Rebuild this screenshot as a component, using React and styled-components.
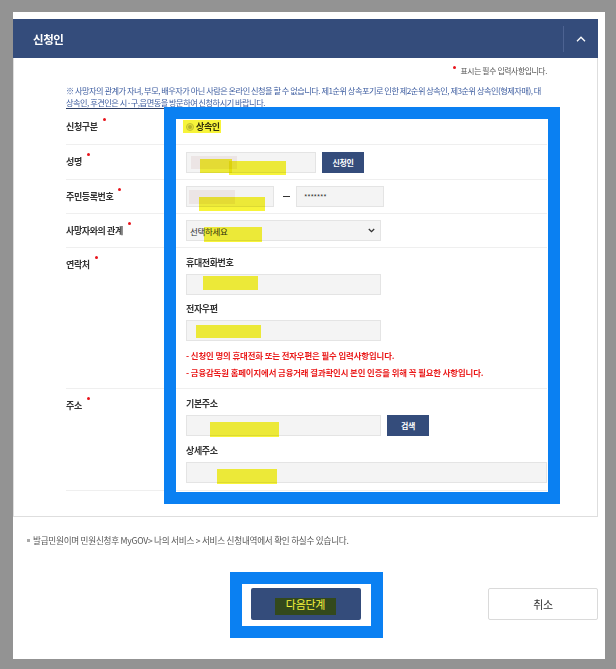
import React from 'react';
import styled, { createGlobalStyle } from 'styled-components';

const FONT = `"Noto Sans CJK KR", "Noto Sans", sans-serif`;
const NAVY = '#344c7b';
const BLUE = '#0a80f2';

const Global = createGlobalStyle`
  html, body { margin: 0; padding: 0; background: #939393; }
  body { font-family: ${FONT}; color: #333; }
  * { box-sizing: border-box; }
`;

const Page = styled.div`
  width: 616px;
  height: 669px;
  padding: 12px 11px 10px 13px;
`;

const Card = styled.div`
  position: relative;
  width: 592px;
  height: 647px;
  background: #fff;
  padding: 7px 7px 0 0;
`;

const Header = styled.header`
  height: 39px;
  background: ${NAVY};
  display: flex;
  align-items: center;
  justify-content: space-between;
  padding-left: 20px;
`;

const Title = styled.h2`
  margin: 0;
  font-size: 11.5px;
  font-weight: 700;
  color: #fff;
  letter-spacing: -0.4px;
`;

const Toggle = styled.div`
  width: 35px;
  height: 26px;
  border-left: 1px solid #4d6392;
  display: flex;
  align-items: center;
  justify-content: center;
`;

const Body = styled.div`
  border: 1px solid #dedede;
  border-top: none;
  padding: 7px 50px 25px 52px;
`;

const ReqNote = styled.p`
  margin: 0;
  text-align: right;
  font-size: 7.8px;
  line-height: 12px;
  color: #555;
  letter-spacing: -0.35px;
  white-space: nowrap;
`;

const Dot = styled.span`
  display: inline-block;
  width: 3px;
  height: 3px;
  border-radius: 50%;
  background: #e8141b;
  vertical-align: top;
  margin-right: 5px;
  position: relative;
  top: 1px;
`;

const Notice = styled.div`
  margin-top: 7px;
  font-size: 8.2px;
  line-height: 12px;
  color: #3d5da0;
  letter-spacing: -0.5px;
  white-space: nowrap;
`;

const Table = styled.div`
  border-top: 1px solid #2c3d63;
`;

const Row = styled.div`
  display: grid;
  grid-template-columns: 110px 1fr;
  border-bottom: 1px solid #efefef;
`;

const Label = styled.div`
  display: flex;
  align-items: ${p => (p.$top ? 'flex-start' : 'center')};
  padding-top: ${p => (p.$top ? 10 : 0)}px;
  font-size: 9px;
  line-height: 14px;
  font-weight: 700;
  color: #333;
  letter-spacing: -0.4px;
  white-space: nowrap;
`;

const LabelText = styled.span`
  display: inline-block;
`;

const ReqDot = styled.span`
  display: inline-block;
  width: 3px;
  height: 3px;
  border-radius: 50%;
  background: #e8141b;
  margin-left: 5px;
  vertical-align: top;
  position: relative;
  top: -2px;
`;

const Value = styled.div`
  display: flex;
  align-items: center;
  gap: 6px;
  padding-left: 10px;
  height: ${p => p.$h}px;
`;

const Stack = styled.div`
  display: flex;
  flex-direction: column;
  padding: 8px 0 0 10px;
  height: ${p => p.$h}px;
`;

const Group = styled.div`
  display: flex;
  flex-direction: column;
  gap: 4px;
  margin-top: ${p => p.$mt || 0}px;
`;

const SubLabel = styled.div`
  font-size: 9px;
  line-height: 14px;
  font-weight: 700;
  color: #333;
  letter-spacing: -0.4px;
`;

const Line = styled.div`
  display: flex;
  align-items: center;
  gap: 6px;
`;

const Field = styled.div`
  position: relative;
  width: ${p => (p.$w ? `${p.$w}px` : '100%')};
  height: 21px;
  background: #f4f4f4;
  border: 1px solid #e4e4e4;
  display: flex;
  align-items: center;
  justify-content: space-between;
  padding: 0 5px 0 3px;
  font-size: 8.5px;
  color: #333;
  letter-spacing: -0.3px;
  flex-shrink: 0;
`;

const Masked = styled.span`
  position: absolute;
  left: ${p => p.$l}px;
  top: ${p => p.$t}px;
  width: ${p => p.$w}px;
  height: ${p => p.$h}px;
  background: #ece5e5;
`;

const Mark = styled.span`
  position: absolute;
  left: ${p => p.$l}px;
  top: ${p => p.$t}px;
  width: ${p => p.$w}px;
  height: ${p => p.$h}px;
  background: #f7f43a;
  mix-blend-mode: multiply;
  pointer-events: none;
`;

const Stars = styled.span`
  font-size: 7.5px;
  letter-spacing: -0.3px;
  padding-left: 4px;
  color: #333;
`;

const Dash = styled.span`
  width: 7px;
  height: 1.5px;
  background: #333;
  margin: 0 0 0 3px;
`;

const SmallBtn = styled.button`
  position: relative;
  width: 42px;
  height: 21px;
  border: none;
  background: ${NAVY};
  color: #fff;
  font-family: ${FONT};
  font-size: 8px;
  font-weight: 700;
  letter-spacing: -0.3px;
  padding: 0;
`;

const Radio = styled.label`
  position: relative;
  display: inline-flex;
  align-items: center;
  gap: 2px;
  font-size: 9px;
  font-weight: 700;
  line-height: 14px;
  letter-spacing: -0.4px;
  color: #333;
`;

const RadioCircle = styled.span`
  width: 8px;
  height: 8px;
  border-radius: 50%;
  border: 1px solid #c9c9c9;
  background: #eee;
  display: flex;
  align-items: center;
  justify-content: center;
  &::after {
    content: '';
    width: 4px;
    height: 4px;
    border-radius: 50%;
    background: #bbb;
  }
`;

const RedNotes = styled.div`
  margin-top: 6px;
  font-size: 8.4px;
  line-height: 17px;
  font-weight: 700;
  color: #ea1a1a;
  letter-spacing: -0.1px;
  white-space: nowrap;
`;

const BottomNote = styled.p`
  margin: 17px 0 0 14px;
  font-size: 8.6px;
  line-height: 12px;
  color: #555;
  letter-spacing: -0.25px;
  white-space: nowrap;
  display: flex;
  align-items: center;
`;

const Bullet = styled.span`
  width: 3px;
  height: 3px;
  background: #aaa;
  margin-right: 3px;
`;

const Buttons = styled.div`
  margin-top: 42px;
  display: grid;
  grid-template-columns: 1fr 110px 1fr;
`;

const NextBtn = styled.button`
  grid-column: 2;
  position: relative;
  height: 32px;
  border: none;
  border-radius: 2px;
  background: ${NAVY};
  color: #fff;
  font-family: ${FONT};
  font-size: 11px;
  letter-spacing: -0.3px;
  padding: 0;
`;

const CancelBtn = styled.button`
  grid-column: 3;
  justify-self: end;
  width: 110px;
  height: 32px;
  border: 1px solid #dadada;
  border-radius: 2px;
  background: #fff;
  color: #333;
  font-family: ${FONT};
  font-size: 11px;
  letter-spacing: -0.3px;
  padding: 0;
`;

const Highlight = styled.div`
  position: absolute;
  left: ${p => p.$l}px;
  top: ${p => p.$t}px;
  width: ${p => p.$w}px;
  height: ${p => p.$h}px;
  border: 12px solid ${BLUE};
  pointer-events: none;
`;

const ChevronUp = () => (
  <svg width="10" height="6" viewBox="0 0 10 6">
    <polyline points="1,5.2 5,1.2 9,5.2" fill="none" stroke="#fff" strokeWidth="1.3" />
  </svg>
);

const ChevronDown = () => (
  <svg width="7" height="5" viewBox="0 0 7 5">
    <polyline points="0.8,1 3.5,3.7 6.2,1" fill="none" stroke="#333" strokeWidth="1.3" />
  </svg>
);

const FormLabel = ({ children, top }) => (
  <Label $top={top}>
    <LabelText>{children}<ReqDot /></LabelText>
  </Label>
);

export default function App() {
  return (
    <>
      <Global />
      <Page>
        <Card>
          <section>
            <Header>
              <Title>신청인</Title>
              <Toggle><ChevronUp /></Toggle>
            </Header>
            <Body>
              <ReqNote><Dot />표시는 필수 입력사항입니다.</ReqNote>
              <Notice>
                <div>※ 사망자의 관계가 자녀, 부모, 배우자가 아닌 사람은 온라인 신청을 할 수 없습니다. 제1순위 상속포기로 인한 제2순위 상속인, 제3순위 상속인(형제자매), 대</div>
                <div>상속인, 후견인은 시·구,읍면동을 방문하여 신청하시기 바랍니다.</div>
              </Notice>
              <Table>
                <Row>
                  <FormLabel>신청구분</FormLabel>
                  <Value $h={35}>
                    <Radio>
                      <RadioCircle />상속인
                      <Mark $l={-3} $t={0} $w={38} $h={13} />
                    </Radio>
                  </Value>
                </Row>
                <Row>
                  <FormLabel>성명</FormLabel>
                  <Value $h={34}>
                    <Field $w={130}>
                      <Masked $l={4} $t={3} $w={46} $h={13} />
                      <Mark $l={13} $t={6} $w={32} $h={14} />
                      <Mark $l={42} $t={8} $w={57} $h={14} />
                    </Field>
                    <SmallBtn>신청인</SmallBtn>
                  </Value>
                </Row>
                <Row>
                  <FormLabel>주민등록번호</FormLabel>
                  <Value $h={33}>
                    <Field $w={88}>
                      <Masked $l={2} $t={3} $w={46} $h={14} />
                      <Mark $l={12} $t={10} $w={66} $h={14} />
                    </Field>
                    <Dash />
                    <Field $w={88}><Stars>*******</Stars></Field>
                  </Value>
                </Row>
                <Row>
                  <FormLabel>사망자와의 관계</FormLabel>
                  <Value $h={33}>
                    <Field $w={195}>
                      <span>선택하세요</span>
                      <ChevronDown />
                      <Mark $l={17} $t={6} $w={58} $h={15} />
                    </Field>
                  </Value>
                </Row>
                <Row>
                  <FormLabel top>연락처</FormLabel>
                  <Stack $h={140}>
                    <Group>
                      <SubLabel>휴대전화번호</SubLabel>
                      <Field $w={195}><Mark $l={16} $t={1} $w={55} $h={14} /></Field>
                    </Group>
                    <Group $mt={7}>
                      <SubLabel>전자우편</SubLabel>
                      <Field $w={195}><Mark $l={9} $t={4} $w={65} $h={13} /></Field>
                    </Group>
                    <RedNotes>
                      <div>- 신청인 명의 휴대전화 또는 전자우편은 필수 입력사항입니다.</div>
                      <div>- 금융감독원 홈페이지에서 금융거래 결과확인시 본인 인증을 위해 꼭 필요한 사항입니다.</div>
                    </RedNotes>
                  </Stack>
                </Row>
                <Row>
                  <FormLabel top>주소</FormLabel>
                  <Stack $h={101}>
                    <Group>
                      <SubLabel>기본주소</SubLabel>
                      <Line>
                        <Field $w={195}><Mark $l={23} $t={6} $w={69} $h={15} /></Field>
                        <SmallBtn>검색</SmallBtn>
                      </Line>
                    </Group>
                    <Group $mt={8}>
                      <SubLabel>상세주소</SubLabel>
                      <Field><Mark $l={30} $t={6} $w={60} $h={15} /></Field>
                    </Group>
                  </Stack>
                </Row>
              </Table>
            </Body>
          </section>

          <BottomNote><Bullet />발급민원이며 민원신청후 MyGOV&gt; 나의 서비스 &gt; 서비스 신청내역에서 확인 하실수 있습니다.</BottomNote>

          <Buttons>
            <NextBtn>
              다음단계
              <Mark $l={24} $t={10} $w={61} $h={17} />
            </NextBtn>
            <CancelBtn>취소</CancelBtn>
          </Buttons>

          <Highlight $l={151} $t={95} $w={396} $h={397} />
          <Highlight $l={217} $t={560} $w={153} $h={66} />
        </Card>
      </Page>
    </>
  );
}
